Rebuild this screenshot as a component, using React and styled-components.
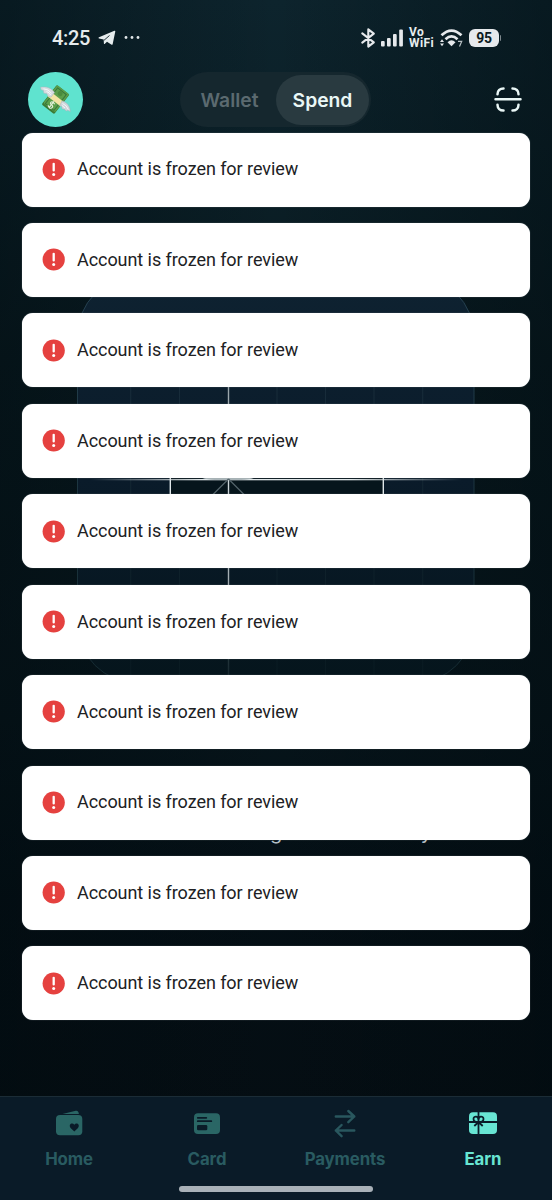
import React from 'react'
import styled, { createGlobalStyle } from 'styled-components'

const GlobalStyle = createGlobalStyle`
  body {
    margin: 0;
    background: #040c11;
  }
  * {
    box-sizing: border-box;
  }
`

const Screen = styled.div`
  position: relative;
  display: flex;
  flex-direction: column;
  width: 552px;
  height: 1200px;
  overflow: hidden;
  font-family: Inter, sans-serif;
  background:
    linear-gradient(90deg, rgba(0, 10, 14, 0.4), transparent 50%, rgba(0, 10, 14, 0.4)),
    linear-gradient(180deg, #0d242d 0%, #0b2028 12%, #08191f 30%, #06141a 60%, #040f15 75%, #050d12 100%);
`

const Backdrop = styled.svg`
  position: absolute;
  top: 0;
  left: 0;
`

const Tagline = styled.div`
  position: absolute;
  top: 820px;
  left: 270px;
  display: flex;
  justify-content: space-between;
  width: 162px;
  font-size: 20px;
  line-height: 24px;
  color: #b4bfc5;
`

const StatusBar = styled.div`
  position: relative;
  display: flex;
  align-items: center;
  justify-content: space-between;
  height: 72px;
  padding: 3px 50px 0 52px;
  font-family: Roboto, sans-serif;
  color: #e6eced;
`

const StatusGroup = styled.div`
  display: flex;
  align-items: center;
`

const Time = styled.span`
  width: 46px;
  padding-top: 1px;
  font-size: 20px;
  font-weight: 500;
  line-height: 24px;
  letter-spacing: -0.35px;
`

const VoWifi = styled.span`
  display: flex;
  flex-direction: column;
  width: 30px;
  margin-left: 6px;
  font-size: 12px;
  font-weight: 700;
  line-height: 10.5px;
  letter-spacing: 0.4px;
`

const Battery = styled.span`
  position: relative;
  width: 30px;
  height: 18px;
  margin-left: 6px;
  margin-right: 3px;
  border-radius: 6px;
  background: #e6e9ec;
  color: #0c1a20;
  font-size: 14px;
  font-weight: 700;
  line-height: 18px;
  letter-spacing: -0.3px;
  text-align: center;

  &::after {
    content: '';
    position: absolute;
    top: 6px;
    right: -2px;
    width: 1.5px;
    height: 6px;
    border-radius: 0 2px 2px 0;
    background: #7d888d;
  }
`

const TopBar = styled.div`
  position: relative;
  display: grid;
  grid-template-columns: 152px 191px 1fr;
  align-items: center;
  height: 55px;
  padding: 0 29px 0 28px;
`

const Avatar = styled.div`
  width: 55px;
  height: 55px;
  border-radius: 50%;
  background: #5fe3cf;
`

const Toggle = styled.div`
  display: flex;
  align-items: center;
  height: 55px;
  padding: 2px;
  border-radius: 28px;
  background: #15272e;
`

const ToggleItem = styled.div`
  display: flex;
  align-items: center;
  justify-content: center;
  width: ${props => props.$active ? '93px' : '94px'};
  height: 50px;
  padding-left: ${props => props.$active ? '0' : '1px'};
  padding-top: 1px;
  border-radius: 25px;
  font-size: 19.3px;
  font-weight: 600;
  color: ${props => props.$active ? '#eaf7f6' : '#5b6a70'};
  background: ${props => props.$active ? '#293a40' : 'transparent'};
`

const ToastList = styled.div`
  position: relative;
  display: flex;
  flex-direction: column;
  gap: 16.45px;
  padding: 5.55px 22px 0;
`

const Toast = styled.div`
  display: flex;
  align-items: center;
  height: 74px;
  padding: 0 0 0.4px 20px;
  border-radius: 11px;
  background: #fff;
  box-shadow: 0 0 1px #8a979c;
`

const ToastText = styled.span`
  margin-left: 12px;
  font-family: Roboto, sans-serif;
  font-size: 18px;
  line-height: 24px;
  letter-spacing: -0.06px;
  color: #202124;
`

const NavBar = styled.div`
  position: relative;
  display: grid;
  grid-template-columns: repeat(4, 1fr);
  height: 104px;
  margin-top: auto;
  padding-top: 11px;
  border-top: 1px solid #1b2c36;
  background: #0a1b28;
`

const NavItem = styled.div`
  display: flex;
  flex-direction: column;
  align-items: center;
  gap: 10px;
  font-size: 16.8px;
  font-weight: 650;
  line-height: 22px;
  letter-spacing: -0.1px;
  color: ${props => props.$active ? '#68e5d3' : '#295b61'};
`

const HomeIndicator = styled.div`
  position: absolute;
  left: 179px;
  bottom: 8px;
  width: 194px;
  height: 6px;
  border-radius: 3px;
  background: #a9b1b8;
`

const GRID_LINES = [130.7, 179.5, 277, 325.5, 374, 422.7]

const GiftCard = () => (
  <Backdrop width="552" height="1200" viewBox="0 0 552 1200" fill="none">
    <defs>
      <linearGradient id="panel" x1="0" y1="276" x2="0" y2="683" gradientUnits="userSpaceOnUse">
        <stop offset="0" stopColor="#0e2231" />
        <stop offset="0.5" stopColor="#0a1b2a" />
        <stop offset="1" stopColor="#05151c" />
      </linearGradient>
      <linearGradient id="edge" x1="0" y1="276" x2="0" y2="683" gradientUnits="userSpaceOnUse">
        <stop offset="0" stopColor="#254150" />
        <stop offset="1" stopColor="#142a31" />
      </linearGradient>
      <linearGradient id="grid" x1="0" y1="276" x2="0" y2="683" gradientUnits="userSpaceOnUse">
        <stop offset="0.1" stopColor="#1b3040" />
        <stop offset="1" stopColor="#091a21" />
      </linearGradient>
      <linearGradient id="ribbon" x1="0" y1="370" x2="0" y2="676" gradientUnits="userSpaceOnUse">
        <stop offset="0" stopColor="#8b989e" />
        <stop offset="0.35" stopColor="#d3dcdf" />
        <stop offset="0.7" stopColor="#a1abb0" />
        <stop offset="0.92" stopColor="#27393f" />
        <stop offset="1" stopColor="#16272e" />
      </linearGradient>
      <linearGradient id="band" x1="90" y1="0" x2="462" y2="0" gradientUnits="userSpaceOnUse">
        <stop offset="0" stopColor="#dfe6e8" stopOpacity="0" />
        <stop offset="0.3" stopColor="#dfe6e8" />
        <stop offset="0.7" stopColor="#dfe6e8" />
        <stop offset="1" stopColor="#dfe6e8" stopOpacity="0" />
      </linearGradient>
    </defs>
    <rect x="77.5" y="276" width="396.5" height="407" rx="60" fill="url(#panel)" stroke="url(#edge)" />
    {GRID_LINES.map(x => (
      <rect key={x} x={x - 0.5} y="325" width="1" height="355" fill="url(#grid)" />
    ))}
    <rect x="170.3" y="404.800" width="213" height="152" rx="14" fill="#06151c" stroke="#dfe6e8" strokeWidth="1.4" />
    <rect x="227.8" y="330" width="1.4" height="352" fill="url(#ribbon)" />
    <rect x="90" y="479" width="372" height="1.3" fill="url(#band)" />
    <path d="M202 477q5 2 13 2h26q8 0 13-2" stroke="#aab5b9" strokeWidth="1.8" />
    <path d="M228.5 479 212 495.500M228.500 479 245 495.500" stroke="#53636a" strokeWidth="1.2" />
  </Backdrop>
)

const TelegramIcon = () => (
  <svg width="18" height="16" viewBox="0 0 18 16">
    <path d="M1 7.300 16.400.7c.6-.2 1 .1.900.8L14.700 14c-.2.900-.7 1.100-1.500.6L9 11.700 6.900 13.800c-.5.500-.9.300-1-.4L5.700 9.600 1 8.400C.4 8.200.4 7.600 1 7.300z" fill="#e6eced" />
    <path d="M6 10.300 11.500 5.500" stroke="#0b1e25" strokeWidth=".9" />
  </svg>
)

const MoreDots = () => (
  <svg width="18" height="16" viewBox="0 0 18 16" fill="#dfe5e7">
    <circle cx="3" cy="7.500" r="1.400" />
    <circle cx="9" cy="7.500" r="1.400" />
    <circle cx="15" cy="7.500" r="1.400" />
  </svg>
)

const SignalIcons = () => (
  <svg width="43" height="20" viewBox="0 0 43 20" fill="#e6e9ec">
    <path d="M2.300 5.300 13.800 14.300 8.300 18.600V1.400l5.500 4.300-11.500 9" fill="none" stroke="#e6e9ec" strokeWidth="2.100" strokeLinejoin="round" strokeLinecap="round" />
    <rect x="21" y="13" width="3.700" height="5.500" rx="1" />
    <rect x="27" y="10" width="3.700" height="8.500" rx="1" />
    <rect x="33" y="6" width="3.700" height="12.500" rx="1" />
    <rect x="39.200" y="1.500" width="3.700" height="17" rx="1" />
  </svg>
)

const WifiIcon = () => (
  <svg width="24" height="18" viewBox="0 0 24 18" fill="#e6e9ec">
    <path d="M2.500 6.300Q12.500-3.200 22.500 6.300M6.500 10.200q6-5.700 12 0" fill="none" stroke="#e6e9ec" strokeWidth="2.700" />
    <path d="M8.500 13.200q4-3.800 8 0L12.500 17.200z" />
    <path d="M1 13 3 10.200 5 13zM1 14.500h4L3 17.200z" />
    <path d="M19 12.400h3.700l-2.200 5" fill="none" stroke="#b9c1c5" strokeWidth="1.200" />
  </svg>
)

const MoneyWings = () => (
  <svg width="55" height="55" viewBox="0 0 55 55">
    <g transform="rotate(38 27.500 27.500)">
      <rect x="19.500" y="15" width="16" height="25" rx="1.500" fill="#3b7a35" />
      <rect x="20" y="15" width="15" height="23" rx="1.500" fill="#5b9f4b" />
      <rect x="22" y="17" width="11" height="20" fill="none" stroke="#37753a" strokeWidth="1" />
      <circle cx="27.500" cy="20" r="2.500" fill="#4a8b3e" />
      <rect x="19.500" y="24.300" width="16" height="5.500" fill="#f3e4a5" />
      <path d="M29.800 31.700q-3.800-1.200-4.200.6t2.200 1.800 1.800 2.400-4.400.2M27.500 30v8" fill="none" stroke="#e2efd9" strokeWidth="1.200" />
    </g>
    <path d="M12.500 15.300c5-1.300 11.500.6 14 5.200L23 25.200l-3.500-1.500-.5-2-3.200-.6-.3-2.600-2.300-.7z" fill="#d6dce0" stroke="#aab6bc" strokeWidth=".5" />
    <path d="M15.500 16.800q5 .2 8 4.500M18.500 19.500q3 .8 4.300 3.500" fill="none" stroke="#f5f7f8" strokeWidth="1" />
    <path d="M34 29c4.500.7 8.300 5 8.300 10.500l-2.600-1.200-1.500.8-1.900-2-2.200-.2-.3-2.500-2.300-.5z" fill="#cfd6dc" stroke="#a3b0b8" strokeWidth=".5" />
    <path d="M34.500 31.500q4 1.500 5.800 6M34 33.500l3 2.500" fill="none" stroke="#f5f7f8" strokeWidth="1" />
  </svg>
)

const ScanSvg = styled.svg`
  justify-self: end;
`

const ScanIcon = () => (
  <ScanSvg width="30" height="30" viewBox="0 0 30 30" fill="none" stroke="#eaf7f6" strokeWidth="2.500" strokeLinecap="round">
    <path d="M2.500 14.300h25M4.500 9.200C4.500 5.700 7 3.400 10.500 3.400M19.500 3.400c3.500 0 6 2.300 6 5.800M4.500 19.800c0 3.500 2.500 5.800 6 5.800M19.500 25.600c3.500 0 6-2.300 6-5.800" />
  </ScanSvg>
)

const AlertIcon = () => (
  <svg width="23" height="23" viewBox="0 0 23 23">
    <circle cx="11.700" cy="11.500" r="11.100" fill="#e5413f" />
    <path d="M11.700 5.800v6.600" stroke="#fff" strokeWidth="2.300" strokeLinecap="round" />
    <circle cx="11.700" cy="16.600" r="1.500" fill="#fff" />
  </svg>
)

const HomeIcon = () => (
  <svg width="30" height="30" viewBox="0 0 30 30" fill="#2a6665">
    <path d="M8.500 6 21.800 2.800c1.600-.4 2.700.6 3 2.600V6z" />
    <rect x="2" y="7" width="26.300" height="20.300" rx="4" />
    <path d="M20.300 23.600l-3.700-3.700c-2.600-3.300 1.700-5.900 3.700-3.100 2-2.800 6.300-.2 3.700 3.100z" fill="#0a1b28" />
  </svg>
)

const CardIcon = () => (
  <svg width="30" height="30" viewBox="0 0 30 30" fill="#2a6665">
    <rect x="2" y="5.300" width="26" height="20.700" rx="4" />
    <path d="M5.800 9.800h8.500M5.800 13.200h13.500" stroke="#0a1b28" strokeWidth="1.800" strokeLinecap="round" />
    <rect x="5" y="17" width="10.300" height="5.300" rx="1.300" fill="#0a1b28" />
  </svg>
)

const PaymentsIcon = () => (
  <svg width="30" height="30" viewBox="0 0 30 30" fill="none" stroke="#29575e" strokeWidth="2.400" strokeLinecap="round" strokeLinejoin="round">
    <path d="M5.800 8.500h18.500M18.300 3l6 5.500-6 5.700M24.300 22.500H5.800M11.600 17l-5.800 5.500 5.800 5.700" />
  </svg>
)

const EarnIcon = () => (
  <svg width="30" height="30" viewBox="0 0 30 30">
    <rect x="1" y="4.300" width="28" height="21.700" rx="4" fill="#68e5d3" />
    <g fill="none" stroke="#0a1b28" strokeWidth="1.800">
      <path d="M1 14h28M10.500 4v22M10.500 14l-4.200 4M10.500 14l4.200 4" />
      <path d="M10.500 14c-3.500 0-5-1.200-5-3.100 0-3.200 5-3.200 5 .6 0-3.800 5-3.800 5-.6 0 1.900-1.500 3.100-5 3.100z" />
    </g>
  </svg>
)

const NavItems = [
  { label: 'Home', icon: HomeIcon },
  { label: 'Card', icon: CardIcon },
  { label: 'Payments', icon: PaymentsIcon },
  { label: 'Earn', icon: EarnIcon, active: true },
]

const Toasts = Array(10).fill('Account is frozen for review')

const App = () => {

  return (
    <Screen>
      <GlobalStyle />
      <GiftCard />
      <Tagline><span>g</span><span>y</span></Tagline>
      <StatusBar>
        <StatusGroup>
          <Time>4:25</Time>
          <TelegramIcon />
          <svg width="7" height="1" />
          <MoreDots />
        </StatusGroup>
        <StatusGroup>
          <SignalIcons />
          <VoWifi>
            <span>Vo</span>
            <span>WiFi</span>
          </VoWifi>
          <WifiIcon />
          <Battery>95</Battery>
        </StatusGroup>
      </StatusBar>
      <TopBar>
        <Avatar><MoneyWings /></Avatar>
        <Toggle>
          <ToggleItem>Wallet</ToggleItem>
          <ToggleItem $active>Spend</ToggleItem>
        </Toggle>
        <ScanIcon />
      </TopBar>
      <ToastList>
        {Toasts.map((text, index) => (
          <Toast key={index}>
            <AlertIcon />
            <ToastText>{text}</ToastText>
          </Toast>
        ))}
      </ToastList>
      <NavBar>
        {NavItems.map(({ label, icon: Icon, active }) => (
          <NavItem key={label} $active={active}>
            <Icon />
            {label}
          </NavItem>
        ))}
        <HomeIndicator />
      </NavBar>
    </Screen>
  )
}

export default App
